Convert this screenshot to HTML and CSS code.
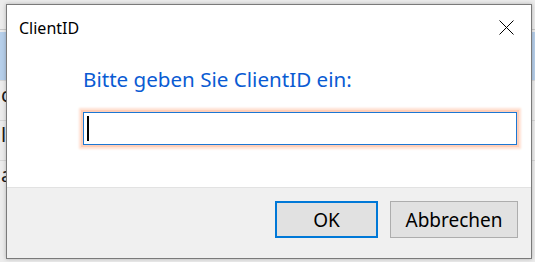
FILE: index.html
```html
<!DOCTYPE html>
<html>
<head>
<meta charset="UTF-8">
<title>ClientID</title>
<link rel="stylesheet" href="styles.css">
</head>
<body>
	<div class="backdrop">
		<div class="bd-top"></div>
		<div class="bd-blue"></div>
		<div class="bd-row">c</div>
		<div class="bd-row">l</div>
		<div class="bd-row">a</div>
	</div>

	<form class="dialog" name="clientid">
		<div class="titlebar">
			<span class="title">ClientID</span>
			<span class="close">
				<svg width="15" height="15" viewBox="0 0 15 15">
					<path d="M0.5 0.5 L14.5 14.5 M14.5 0.5 L0.5 14.5" stroke="#000" stroke-width="1" fill="none"/>
				</svg>
			</span>
		</div>
		<div class="content">
			<div class="label">Bitte geben Sie ClientID ein:</div>
			<div class="field">
				<span class="caret"></span>
			</div>
		</div>
		<div class="footer">
			<button type="button" class="btn btn_default">OK</button>
			<button type="button" class="btn">Abbrechen</button>
		</div>
	</form>
</body>
</html>
```

FILE: styles.css
```css
* {
	box-sizing: border-box;
}

body {
	margin: 0;
	width: 535px;
	height: 262px;
	overflow: hidden;
	position: relative;
	background: #ececec;
	font-family: "Segoe UI", "Noto Sans", "Open Sans", sans-serif;
}

/* window behind the dialog */
.backdrop {
	height: 262px;
}

.bd-top {
	height: 30px;
	border-bottom: 1px solid #c8c8c8;
}

.bd-blue {
	height: 48px;
	margin-top: 2px;
	background: #b6cfea;
}

.bd-row {
	height: 40px;
	padding-left: 1px;
	border-top: 1px solid #d6d6d6;
	font-size: 20px;
	color: #1a1a1a;
}

/* dialog */
.dialog {
	position: absolute;
	top: 4px;
	left: 6px;
	width: 526px;
	height: 255px;
	margin: 0;
	border: 1px solid #7a7a7a;
	background: #fff;
	display: flex;
	flex-direction: column;
	box-shadow: 0 0 4px rgba(0, 0, 0, 0.25);
}

.titlebar {
	height: 44px;
	flex: none;
	display: flex;
	align-items: center;
	justify-content: space-between;
	padding: 0 17px 0 12px;
}

.title {
	font-size: 16px;
	color: #000;
	margin-top: 2px;
}

.close {
	display: flex;
	margin-top: 1px;
}

.content {
	flex: 1;
	padding: 0 14px 0 76px;
}

.label {
	font-size: 20.6px;
	color: #0a5bd3;
	line-height: 28px;
	margin-top: 16px;
}

.field {
	margin-top: 19px;
	height: 33px;
	border: 1px solid #1b77d4;
	box-shadow: 0 0 0 2px #ffcfb9, 0 0 2px 4px #ffe1d3;
	display: flex;
	align-items: center;
	padding-left: 3px;
}

.caret {
	width: 2px;
	height: 25px;
	background: #000;
}

.footer {
	height: 71px;
	flex: none;
	background: #f0f0f0;
	border-top: 1px solid #e2e2e2;
	display: flex;
	justify-content: flex-end;
	align-items: flex-start;
	gap: 12px;
	padding: 13px 13px 0 0;
}

.btn {
	height: 37px;
	width: 128px;
	border: 1px solid #adadad;
	background: #e1e1e1;
	font-family: inherit;
	font-size: 19px;
	color: #000;
	padding: 0;
}

.btn_default {
	width: 103px;
	border: 2px solid #0078d7;
}
```
